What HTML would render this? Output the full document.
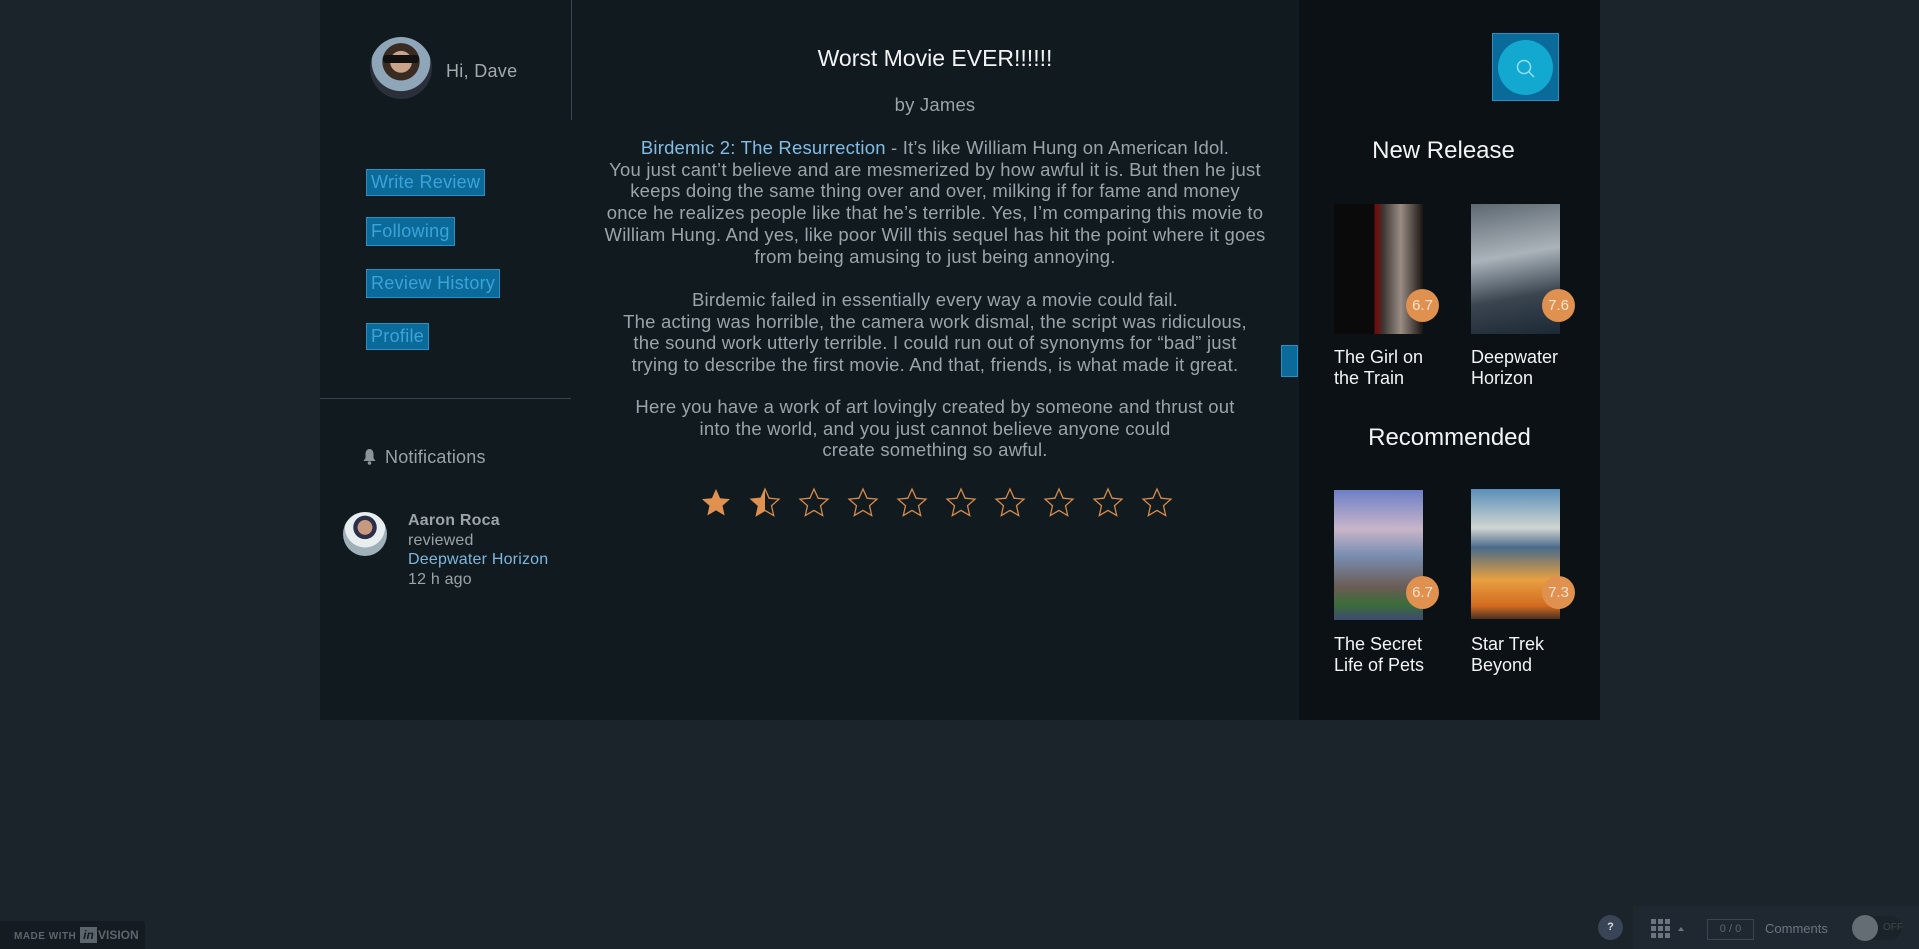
<!DOCTYPE html>
<html><head><meta charset="utf-8"><style>
*{margin:0;padding:0;box-sizing:border-box}
body{width:1919px;height:949px;background:#1a242a;font-family:"Liberation Sans",sans-serif;position:relative;overflow:hidden}
.a{position:absolute}
#main{left:320px;top:0;width:980px;height:720px;background:#101a1f}
#right{left:1299px;top:0;width:301px;height:720px;background:#0b1115}
.btn{position:absolute;left:366px;height:27px;background:#0a6a99;border:1px solid #2b8fc4;color:#3ba3d8;font-size:18px;line-height:25px;padding:0 4px;letter-spacing:.3px}
.c{text-align:center;color:#9aa4a9;font-size:18.5px;letter-spacing:.2px;line-height:21.7px;width:760px;left:555px}
.poster{position:absolute;width:89px;height:130px}
.badge{position:absolute;width:33px;height:33px;border-radius:50%;background:#e0914f;color:#f7e3cf;font-size:15px;line-height:33px;text-align:center}
.tt{position:absolute;color:#f2f4f5;font-size:18px;line-height:21px}
.h{position:absolute;color:#f2f4f5;font-size:24px;text-align:center;width:301px;left:1299px}
</style></head><body>
<div class="a" id="main"></div>
<div class="a" id="right"></div>
<div class="a" style="left:571px;top:0;width:1px;height:120px;background:#3a454b"></div>
<div class="a" style="left:320px;top:398px;width:251px;height:1px;background:#3a454b"></div>

<div class="a" style="left:370px;top:37px;width:62px;height:62px;border-radius:50%;background:radial-gradient(circle at 50% 40%,#c9a38a 0 22%,#3a2b22 23% 38%,#8fa6b8 39% 60%,#2a2f3a 61%)"></div>
<div class="a" style="left:383px;top:55px;width:36px;height:8px;background:#111;border-radius:3px"></div>
<div class="a" style="left:446px;top:61px;color:#a2aaae;font-size:18px;letter-spacing:.3px">Hi, Dave</div>

<div class="btn" style="top:169px">Write Review</div>
<div class="btn" style="top:217px;height:29px;line-height:27px">Following</div>
<div class="btn" style="top:269px;height:29px;line-height:27px">Review History</div>
<div class="btn" style="top:323px">Profile</div>

<svg class="a" style="left:362px;top:448px" width="15" height="17" viewBox="0 0 15 17"><path d="M7.5 1C4.5 1 3.5 4 3.5 6v4L1.5 13h12L11.5 10V6C11.5 4 10.5 1 7.5 1z" fill="#8b9499"/><circle cx="7.5" cy="15" r="1.8" fill="#8b9499"/></svg>
<div class="a" style="left:385px;top:447px;color:#9aa3a8;font-size:18px;letter-spacing:.2px">Notifications</div>
<div class="a" style="left:343px;top:512px;width:44px;height:44px;border-radius:50%;background:radial-gradient(circle at 50% 35%,#c79a80 0 20%,#2c2f4a 21% 32%,#e8eef0 33% 55%,#9fb0b8 56%)"></div>
<div class="a" style="left:408px;top:511px;font-size:16px;line-height:19.5px;color:#9aa3a8;letter-spacing:.2px"><b style="color:#9ca4a8">Aaron Roca</b><br>reviewed<br><span style="color:#7fb6e0">Deepwater Horizon</span><br>12 h ago</div>

<div class="a c" style="top:48px;color:#f2f4f5;font-size:23px;letter-spacing:0">Worst Movie EVER!!!!!!</div>
<div class="a c" style="top:94px">by James</div>
<div class="a c" style="top:137px"><span style="color:#82bde6">Birdemic 2: The Resurrection</span> - It’s like William Hung on American Idol.<br>You just cant’t believe and are mesmerized by how awful it is. But then he just<br>keeps doing the same thing over and over, milking if for fame and money<br>once he realizes people like that he’s terrible. Yes, I’m comparing this movie to<br>William Hung. And yes, like poor Will this sequel has hit the point where it goes<br>from being amusing to just being annoying.</div>
<div class="a c" style="top:289px">Birdemic failed in essentially every way a movie could fail.<br>The acting was horrible, the camera work dismal, the script was ridiculous,<br>the sound work utterly terrible. I could run out of synonyms for “bad” just<br>trying to describe the first movie. And that, friends, is what made it great.</div>
<div class="a c" style="top:396px">Here you have a work of art lovingly created by someone and thrust out<br>into the world, and you just cannot believe anyone could<br>create something so awful.</div>

<svg class="a" style="left:700px;top:487px" width="480" height="32" viewBox="0 0 480 32">
<defs><path id="s" d="M16 2l4.1 9.2 9.9.9-7.5 6.6 2.2 9.8L16 23.4 7.3 28.5l2.2-9.8L2 12.1l9.9-.9z"/>
<clipPath id="hl"><rect x="0" y="0" width="16" height="32"/></clipPath></defs>
<use href="#s" fill="#e0914f"/>
<g transform="translate(49,0)"><use href="#s" fill="none" stroke="#d38a4c" stroke-width="1.3"/><use href="#s" fill="#e0914f" clip-path="url(#hl)"/></g>
<g fill="none" stroke="#d38a4c" stroke-width="1.3">
<use href="#s" x="98"/><use href="#s" x="147"/><use href="#s" x="196"/><use href="#s" x="245"/><use href="#s" x="294"/><use href="#s" x="343"/><use href="#s" x="392"/><use href="#s" x="441"/></g></svg>

<div class="a" style="left:1281px;top:345px;width:17px;height:32px;background:#0a6a99;border:1px solid #2b8fc4"></div>

<div class="a" style="left:1492px;top:33px;width:67px;height:68px;background:#0a6a99;border:1px solid #2b8fc4"></div>
<div class="a" style="left:1498px;top:40px;width:55px;height:55px;border-radius:50%;background:#13a8d0"></div>
<svg class="a" style="left:1514px;top:57px" width="24" height="24" viewBox="0 0 24 24"><circle cx="10" cy="10" r="6.5" fill="none" stroke="#8fe0f4" stroke-width="1.5"/><path d="M15 15l5 5" stroke="#8fe0f4" stroke-width="1.5"/></svg>

<div class="h" style="top:137px;left:1293px">New Release</div>
<div class="poster" style="left:1334px;top:204px;background:linear-gradient(90deg,#0a0a0a 0 45%,#6a1010 46% 49%,#3b3633 55%,#9a8c84 75%,#1a1512 100%)"></div>
<div class="poster" style="left:1471px;top:204px;background:linear-gradient(170deg,#5e6870,#aab3ba 40%,#3a4550 70%,#1c2835)"></div>
<div class="badge" style="left:1406px;top:289px">6.7</div>
<div class="badge" style="left:1542px;top:289px">7.6</div>
<div class="tt" style="left:1334px;top:347px">The Girl on<br>the Train</div>
<div class="tt" style="left:1471px;top:347px">Deepwater<br>Horizon</div>

<div class="h" style="top:424px;left:1299px">Recommended</div>
<div class="poster" style="left:1334px;top:490px;background:linear-gradient(180deg,#6d7fc6,#c9b5c9 30%,#7a8fb2 50%,#6a5c54 75%,#3b6d3a 88%,#3e4a70)"></div>
<div class="poster" style="left:1471px;top:489px;background:linear-gradient(180deg,#5a8fb9,#d0d6d0 30%,#4a6a8a 45%,#e8a040 70%,#d26a20 90%,#4a3020)"></div>
<div class="badge" style="left:1406px;top:576px">6.7</div>
<div class="badge" style="left:1542px;top:576px">7.3</div>
<div class="tt" style="left:1334px;top:634px">The Secret<br>Life of Pets</div>
<div class="tt" style="left:1471px;top:634px">Star Trek<br>Beyond</div>

<div class="a" style="left:0;top:921px;width:145px;height:28px;background:#141c21;border-radius:0 4px 0 0"></div>
<div class="a" style="left:14px;top:931px;font-size:10px;font-weight:bold;color:#5b656b;letter-spacing:.5px">MADE WITH</div>
<div class="a" style="left:80px;top:927px;width:17px;height:16px;background:#5b656b;color:#141c21;font-size:12px;font-weight:bold;text-align:center;line-height:16px;font-style:italic">in</div>
<div class="a" style="left:98px;top:928px;font-size:12px;font-weight:bold;color:#5b656b">VISION</div>

<div class="a" style="left:1633px;top:906px;width:286px;height:43px;background:#1f2831"></div>
<div class="a" style="left:1598px;top:915px;width:25px;height:25px;border-radius:50%;background:#394556;color:#d8dde2;font-size:11px;font-weight:bold;text-align:center;line-height:25px">?</div>
<svg class="a" style="left:1650px;top:919px" width="40" height="22"><g fill="#6b7580"><rect x="1" y="0" width="5" height="5"/><rect x="8" y="0" width="5" height="5"/><rect x="15" y="0" width="5" height="5"/><rect x="1" y="7" width="5" height="5"/><rect x="8" y="7" width="5" height="5"/><rect x="15" y="7" width="5" height="5"/><rect x="1" y="14" width="5" height="5"/><rect x="8" y="14" width="5" height="5"/><rect x="15" y="14" width="5" height="5"/><path d="M28 12l3-4 3 4z"/></g></svg>
<div class="a" style="left:1707px;top:919px;width:47px;height:21px;border:1px solid #3a4550;color:#5b6670;font-size:11px;line-height:19px;text-align:center">0 / 0</div>
<div class="a" style="left:1765px;top:921px;color:#6b7580;font-size:13px">Comments</div>
<div class="a" style="left:1852px;top:916px;width:50px;height:24px;border-radius:12px;background:#1a222a"></div>
<div class="a" style="left:1852px;top:915px;width:26px;height:26px;border-radius:50%;background:#646c74"></div>
<div class="a" style="left:1883px;top:922px;color:#3f4850;font-size:10px">OFF</div>
</body></html>
